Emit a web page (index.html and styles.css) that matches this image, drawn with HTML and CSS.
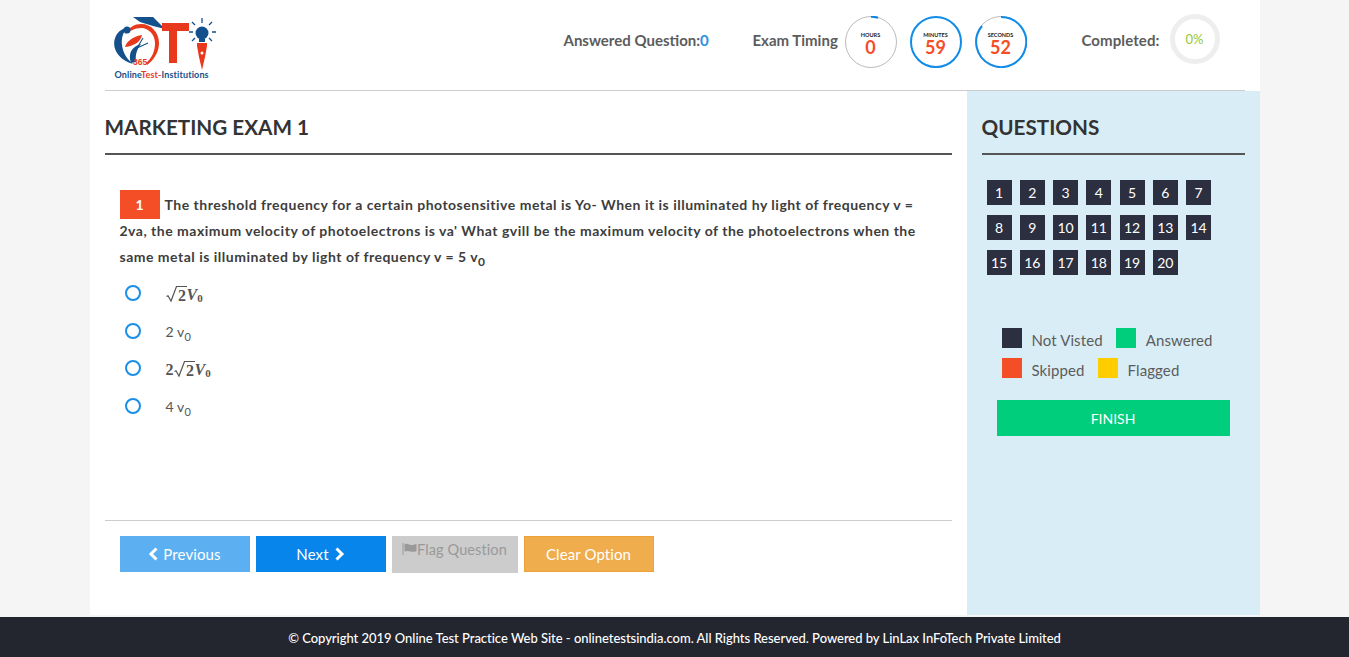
FILE: index.html
```html
<!DOCTYPE html>
<html lang="en">
<head>
<meta charset="utf-8">
<title>Marketing Exam 1</title>
<link rel="stylesheet" href="styles.css">
</head>
<body>
<div class="page">
  <header class="header">
    <div class="logo">
      <svg class="logo-art" width="104" height="62" viewBox="0 0 104 62">
        <path d="M20 2 L40 2 L52 14 L40 11 L27 7 Z" fill="#14508c"/>
        <path d="M20 49 C3 44 -3 30 4 19 C7 15 11 13 15 12 C10 17 8 23 9 30 C10 38 14 44 20 49 Z" fill="#14508c"/>
        <path d="M12 19 C16 12 22 9 28 9 C38 9 46 17 46 28 C46 36 42 44 34 50 L33 48 C39 43 42 36 42 28 C42 20 36 13 28 13 C22 13 17 16 12 19 Z" fill="#e9391c"/>
        <path d="M18 48 C15 39 18 32 28 29 C24 34 22 40 23 47 Z" fill="#14508c"/>
        <path d="M12 32 C14 25 22 21 29 20 C28 26 22 31 12 32 Z" fill="#e9391c"/>
        <path d="M24 33 L30 23 M24 33 L35 28" stroke="#14508c" stroke-width="1.100" fill="none"/>
        <circle cx="14" cy="15" r="3.500" fill="#14508c"/>
        <rect x="49" y="8" width="27" height="8" fill="#e9391c"/>
        <rect x="56" y="8" width="8" height="40" fill="#e9391c"/>
        <circle cx="89" cy="18" r="6.500" fill="#14508c"/>
        <rect x="86" y="24" width="6" height="3" fill="#14508c"/>
        <path d="M89 3V8M76 17H80M99 17H103M79 7L82 10M99 7L96 10M79 26L82 23M99 26L96 23" stroke="#14508c" stroke-width="1.300"/>
        <path d="M84 28 H94 V31 L92 42 L89 55 L86 42 L84 31 Z" fill="#e9391c"/>
        <circle cx="89" cy="38" r="1.500" fill="#fff"/>
        <text class="logo-365" x="20" y="50">365</text>
      </svg>
      <div class="logo-name">Online<span class="logo-test">Test-</span>Institutions</div>
    </div>
    <div class="answered">Answered Question:<span class="answered-count">0</span></div>
    <div class="timing-label">Exam Timing</div>
    <div class="dial dial-hours">
      <svg class="dial-ring" viewBox="0 0 52 52"><circle cx="26" cy="26" r="25.500" fill="none" stroke="#bbb" stroke-width="1"/><path d="M26 .7A25.300 25.300 0 0 1 33 1.700" fill="none" stroke="#0785ea" stroke-width="2"/></svg>
      <span class="dial-label">HOURS</span><span class="dial-value">0</span>
    </div>
    <div class="dial dial-minutes">
      <svg class="dial-ring" viewBox="0 0 52 52"><circle cx="26" cy="26" r="25" fill="none" stroke="#0f8ce9" stroke-width="2"/></svg>
      <span class="dial-label">MINUTES</span><span class="dial-value">59</span>
    </div>
    <div class="dial dial-seconds">
      <svg class="dial-ring" viewBox="0 0 52 52"><circle cx="26" cy="26" r="25.500" fill="none" stroke="#bbb" stroke-width="1"/><path d="M26 1A25 25 0 1 1 7 10" fill="none" stroke="#0f8ce9" stroke-width="2"/></svg>
      <span class="dial-label">SECONDS</span><span class="dial-value">52</span>
    </div>
    <div class="completed-label">Completed:</div>
    <div class="progress">0%</div>
  </header>
  <div class="columns">
    <main class="exam">
      <h1 class="exam-title">MARKETING EXAM 1</h1>
      <div class="question">
        <p class="question-text"><span class="question-no">1</span>The threshold frequency for a certain photosensitive metal is Yo- When it is illuminated hy light of frequency v = 2va, the maximum velocity of photoelectrons is va' What gvill be the maximum velocity of the photoelectrons when the same metal is illuminated by light of frequency v = 5 v<sub>0</sub></p>
        <ul class="options">
          <li class="option"><span class="radio"></span><span class="math"><svg class="radical" viewBox="0 0 12 17"><path d="M.5 10.500L2 9.700L5 15L10.500 .5H12" fill="none" stroke="#555" stroke-width="1.200"/></svg><span class="over">2</span><i>V</i><sub>0</sub></span></li>
          <li class="option"><span class="radio"></span><span class="plain">2 v<sub>0</sub></span></li>
          <li class="option"><span class="radio"></span><span class="math">2<svg class="radical" viewBox="0 0 12 17"><path d="M.5 10.500L2 9.700L5 15L10.500 .5H12" fill="none" stroke="#555" stroke-width="1.200"/></svg><span class="over">2</span><i>V</i><sub>0</sub></span></li>
          <li class="option"><span class="radio"></span><span class="plain">4 v<sub>0</sub></span></li>
        </ul>
      </div>
      <div class="actions">
        <button class="btn btn-prev"><svg class="chev" viewBox="0 0 10 14"><path d="M8 1.500 L2.500 7 L8 12.500" fill="none" stroke="currentColor" stroke-width="3"/></svg>Previous</button>
        <button class="btn btn-next">Next<svg class="chev chev-after" viewBox="0 0 10 14"><path d="M2 1.500 L7.500 7 L2 12.500" fill="none" stroke="currentColor" stroke-width="3"/></svg></button>
        <button class="btn btn-flag"><svg class="flag" viewBox="0 0 14 12"><path d="M0 0H1V12H0Z M2 1C5 0 7 2 9 2C11 2 12 1.500 14 1V8C12 9 10 9 8 8.500C6 8 4 7.500 2 8.500Z" fill="currentColor"/></svg>Flag Question</button>
        <button class="btn btn-clear">Clear Option</button>
      </div>
    </main>
    <aside class="side">
      <h2 class="side-title">QUESTIONS</h2>
      <div class="tiles">
        <span class="tile">1</span><span class="tile">2</span><span class="tile">3</span><span class="tile">4</span><span class="tile">5</span><span class="tile">6</span><span class="tile">7</span>
        <span class="tile">8</span><span class="tile">9</span><span class="tile">10</span><span class="tile">11</span><span class="tile">12</span><span class="tile">13</span><span class="tile">14</span>
        <span class="tile">15</span><span class="tile">16</span><span class="tile">17</span><span class="tile">18</span><span class="tile">19</span><span class="tile">20</span>
      </div>
      <div class="legend">
        <div class="legend-row"><span class="swatch sw-dark"></span><span class="legend-text">Not Visted</span><span class="swatch sw-green"></span><span class="legend-text">Answered</span></div>
        <div class="legend-row"><span class="swatch sw-red"></span><span class="legend-text">Skipped</span><span class="swatch sw-yellow"></span><span class="legend-text">Flagged</span></div>
      </div>
      <button class="finish">FINISH</button>
    </aside>
  </div>
</div>
<footer class="footer">© Copyright 2019 Online Test Practice Web Site - onlinetestsindia.com. All Rights Reserved. Powered by LinLax InFoTech Private Limited</footer>
</body>
</html>
```
FILE: styles.css
```css
* { box-sizing: border-box; }
html, body { margin: 0; padding: 0; }
body {
  background: #f5f5f5;
  font-family: "Lato", "Liberation Sans", sans-serif;
  color: #555;
  height: 657px;
  overflow: hidden;
  display: flex;
  flex-direction: column;
}
.page {
  width: 1170px;
  height: 615px;
  margin: 0 auto;
  background: #fff;
  display: flex;
  flex-direction: column;
}
.header {
  height: 91px;
  margin: 0 15px;
  border-bottom: 1px solid #ccc;
  display: flex;
  align-items: flex-start;
  flex: none;
}
.logo { width: 110px; margin: 15px 0 0 8px; flex: none; position: relative; height: 64px; }
.logo-art { display: block; position: absolute; left: 0; top: 0; }
.logo-365 { font: bold 8.500px "Liberation Sans", sans-serif; fill: #e9391c; }
.logo-name {
  position: absolute; left: 2px; top: 53.500px;
  font: bold 9px/11px "Lato", sans-serif;
  color: #14508c; white-space: nowrap; letter-spacing: .14px;
}
.logo-test { color: #e9391c; }
.answered { margin: 31px 0 0 341px; width: 189px; font-weight: bold; font-size: 15px; line-height: 18px; color: #5c5c5c; flex: none; }
.answered-count { color: #2a8fdf; }
.timing-label { margin: 31px 0 0 0; width: 92px; font-weight: bold; font-size: 15px; line-height: 18px; color: #5c5c5c; flex: none; }
.dial { position: relative; width: 52px; height: 52px; margin: 16px 13px 0 0; flex: none; text-align: center; }
.dial-ring { position: absolute; left: 0; top: 0; width: 52px; height: 52px; }
.dial-label { display: block; padding-top: 17px; font-size: 5.500px; line-height: 5px; font-weight: bold; color: #222; }
.dial-value { display: block; font-size: 18px; line-height: 18px; font-weight: bold; color: #f44e27; }
.completed-label { margin: 31px 0 0 42px; width: 88px; font-weight: bold; font-size: 15px; line-height: 18px; letter-spacing: .1px; color: #5c5c5c; flex: none; }
.progress {
  width: 50px; height: 50px; margin-top: 14px; flex: none;
  border: 5px solid #eee; border-radius: 50%;
  display: flex; align-items: center; justify-content: center;
  font-size: 13px; color: #98c832;
}
.columns { flex: 1; display: flex; min-height: 0; }
.exam { width: 862px; margin-left: 15px; flex: none; display: flex; flex-direction: column; }
.exam-title {
  margin: 0; height: 64px; padding-top: 24px;
  font-size: 20.700px; line-height: 24px; font-weight: bold; color: #333;
  border-bottom: 2px solid #555;
  width: 847px;
}
.question { height: 366px; width: 847px; padding: 37px 15px 0; border-bottom: 1px solid #ccc; }
.question-text { margin: 0; font-size: 14px; line-height: 26px; font-weight: bold; color: #3d3d3d; letter-spacing: .5px; }
.question-text sub { font-size: 12px; line-height: 0; }
.question-no {
  display: inline-block; width: 40px; height: 29px; margin: -2px 5px -2px 0;
  background: #f44e27; color: #fff; text-align: center; line-height: 29px; letter-spacing: 0;
}
.options { list-style: none; margin: 12px 0 0; padding: 0; }
.option { height: 37.500px; display: flex; align-items: flex-start; font-size: 14px; color: #555; line-height: 22px; }
.option sub { font-size: 11px; line-height: 0; }
.radio { width: 16px; height: 16px; margin: 3px 25px 0 5px; border: 2px solid #1a8fe8; border-radius: 50%; flex: none; }
.plain { padding-top: 1px; letter-spacing: .1px; }
.math { font-family: "Liberation Serif", serif; font-weight: bold; font-size: 16px; color: #555; padding-top: 2px; display: flex; align-items: flex-start; }
.math sub { font-size: 11px; line-height: 1; margin-top: 9px; }
.radical { width: 12px; height: 17px; margin-top: 2px; flex: none; }
.over { border-top: 1px solid #555; margin-top: 2px; line-height: 18px; height: 18px; padding: 0 .5px; }
.actions { display: flex; gap: 6px; padding: 15px 0 0 15px; align-items: flex-start; }
.btn { height: 36px; width: 130px; border: 0; padding: 0; font: 15px "Lato", sans-serif; letter-spacing: .1px; color: #fff; display: flex; align-items: center; justify-content: center; }
.btn-prev { background: #5cb0f2; }
.btn-next { background: #0785ea; }
.btn-flag { background: #ccc; color: #999; width: 126px; height: 37px; padding: 0 0 11px; font-size: 14.500px; }
.btn-clear { background: #f0ad4e; border: 1px solid #eea236; }
.chev { width: 11px; height: 14px; margin-right: 4px; }
.chev-after { margin: 0 0 0 5px; }
.flag { width: 15px; height: 12px; }
.side { flex: 1; background: #d9edf6; padding: 0 15px; }
.side-title {
  margin: 0; height: 64px; padding-top: 24px;
  font-size: 20.700px; line-height: 24px; font-weight: bold; color: #333;
  border-bottom: 2px solid #555;
}
.tiles { display: flex; flex-wrap: wrap; gap: 10px 8.250px; margin: 25px 0 0 5px; width: 240px; }
.tile { width: 25px; height: 25px; background: #2c2f3f; color: #fff; font-size: 14px; text-align: center; line-height: 25px; }
.legend { margin: 53px 0 0 20px; }
.legend-row { display: flex; align-items: flex-start; height: 30px; font-size: 15px; line-height: 25px; letter-spacing: .1px; color: #5c5c5c; }
.swatch { width: 20px; height: 20px; margin-right: 10px; flex: none; }
.legend-text { margin-right: 13px; }
.sw-dark { background: #2c2f3f; }
.sw-green { background: #00ce7d; }
.sw-red { background: #f44e27; }
.sw-yellow { background: #fc0; }
.finish { display: block; width: 233px; height: 36px; margin: 12px 0 0 15px; border: 0; background: #00ce7d; color: #fff; font: 14px "Lato", sans-serif; }
.footer {
  height: 40px; margin-top: 2px; flex: none;
  background: #23262f; color: #fff;
  text-align: center; font-size: 13px; line-height: 43px; font-weight: 500; letter-spacing: -.03px;
}
```
